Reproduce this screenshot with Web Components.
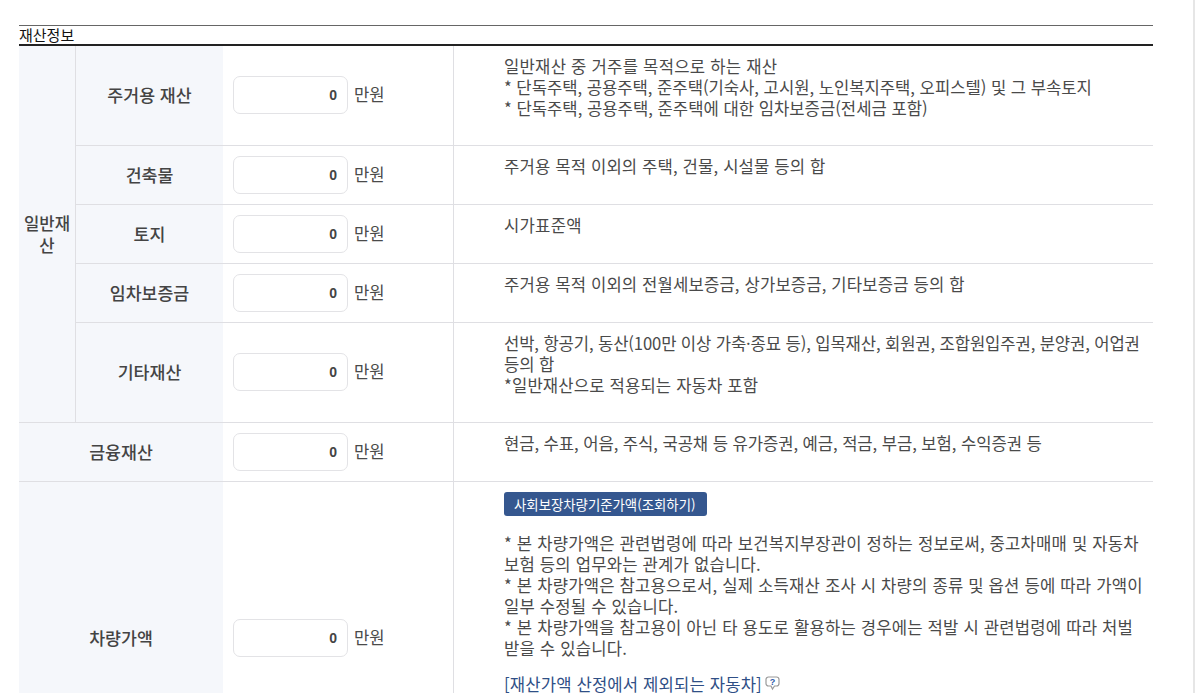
<!DOCTYPE html>
<html lang="ko">
<head>
<meta charset="utf-8">
<style>
  html, body { margin: 0; height: 693px; overflow: hidden; background: #fff; }
  body { font-family: "Noto Sans CJK KR", "Noto Sans", sans-serif; }
  /* small per-line tracking, the reference font has wider hangul and narrower commas */
  .a { letter-spacing: .24px; }
  .b { letter-spacing: .15px; }
  .c { letter-spacing: -.03px; }
  .d { letter-spacing: -.13px; }
  .e { letter-spacing: .19px; }
  .f { letter-spacing: -.08px; }
</style>
</head>
<body>
<asset-panel title-text="재산정보">
  <asset-group label="일반재산">
    <asset-row label="주거용 재산" style="--row-h:99px">
      <p><span class="a">일반재산 중 거주를 목적으로 하는 재산</span><br><span class="c">* 단독주택, 공용주택, 준주택(기숙사, 고시원, 노인복지주택, 오피스텔) 및 그 부속토지</span><br>* 단독주택, 공용주택, 준주택에 대한 임차보증금(전세금 포함)</p>
    </asset-row>
    <asset-row label="건축물" style="--row-h:58px"><p class="b">주거용 목적 이외의 주택, 건물, 시설물 등의 합</p></asset-row>
    <asset-row label="토지" style="--row-h:58px"><p class="a">시가표준액</p></asset-row>
    <asset-row label="임차보증금" style="--row-h:58px"><p class="b">주거용 목적 이외의 전월세보증금, 상가보증금, 기타보증금 등의 합</p></asset-row>
    <asset-row label="기타재산" style="--row-h:99px">
      <p><span class="d">선박, 항공기, 동산(100만 이상 가축·종묘 등), 입목재산, 회원권, 조합원입주권, 분양권, 어업권 등의 합</span><br><span class="b">*일반재산으로 적용되는 자동차 포함</span></p>
    </asset-row>
  </asset-group>
  <asset-row label="금융재산" wide style="--row-h:58px"><p class="f">현금, 수표, 어음, 주식, 국공채 등 유가증권, 예금, 적금, 부금, 보험, 수익증권 등</p></asset-row>
  <asset-row label="차량가액" wide style="--row-h:312px">
    <lookup-button>사회보장차량기준가액(조회하기)</lookup-button>
    <p class="e">* 본 차량가액은 관련법령에 따라 보건복지부장관이 정하는 정보로써, 중고차매매 및 자동차 보험 등의 업무와는 관계가 없습니다.<br>* 본 차량가액은 참고용으로서, 실제 소득재산 조사 시 차량의 종류 및 옵션 등에 따라 가액이 일부 수정될 수 있습니다.<br>* 본 차량가액을 참고용이 아닌 타 용도로 활용하는 경우에는 적발 시 관련법령에 따라 처벌 받을 수 있습니다.</p>
    <help-link class="b">[재산가액 산정에서 제외되는 자동차]</help-link>
  </asset-row>
</asset-panel>

<script>
// shared text look for the cells
const TEXT_FONT = `"Noto Sans CJK KR", "Noto Sans", sans-serif`;

class AssetPanel extends HTMLElement {
  constructor() {
    super();
    this.shadow = this.attachShadow({ mode: 'open' });
    this.shadow.innerHTML = `
      <style>
        :host { display: block; padding: 25px 40px 0 19px; height: 693px; overflow: hidden; border-right: 2px solid #e6e6e6; box-sizing: border-box; font-family: ${TEXT_FONT}; }
        .cap { border-top: 1px solid #666; border-bottom: 2px solid #222; height: 18px; font-size: 15px; line-height: 17px; color: #111; }
      </style>
      <div class="cap">${this.getAttribute('title-text')}</div>
      <slot></slot>
    `;
  }
}

class AssetGroup extends HTMLElement {
  constructor() {
    super();
    this.shadow = this.attachShadow({ mode: 'open' });
    this.shadow.innerHTML = `
      <style>
        :host { display: flex; }
        .label { width: 56px; flex: none; border-right: 1px solid #dfdfe3; border-bottom: 1px solid #dfdfe3; background: #f5f7fb; display: flex; align-items: center; justify-content: center; text-align: center; font-size: 16.7px; line-height: 22px; color: #444; font-weight: 500; word-break: break-all; }
        .rows { flex: 1; min-width: 0; }
      </style>
      <div class="label">${this.getAttribute('label')}</div>
      <div class="rows"><slot></slot></div>
    `;
  }
}

class AssetRow extends HTMLElement {
  constructor() {
    super();
    this.shadow = this.attachShadow({ mode: 'open' });
    this.shadow.innerHTML = `
      <style>
        :host { display: flex; min-height: var(--row-h); border-bottom: 1px solid #dfdfe3; font-size: 16.65px; color: #4a4a4a; }
        :host([wide]) .head { width: 204px; }
        .head { width: 147px; flex: none; box-sizing: border-box; padding-bottom: 2px; background: #f5f7fb; display: flex; align-items: center; justify-content: center; font-size: 17.3px; font-weight: 500; color: #444; }
        .amount { width: 231px; flex: none; box-sizing: border-box; padding: 0 0 1px 10px; border-right: 1px solid #dfdfe3; display: flex; align-items: center; }
        .desc { flex: 1; min-width: 0; padding: 10px 5px 0 50px; line-height: 21px; word-break: keep-all; }
        ::slotted(p) { margin: 0; }
      </style>
      <div class="head">${this.getAttribute('label')}</div>
      <div class="amount"><money-input></money-input></div>
      <div class="desc"><slot></slot></div>
    `;
  }
}

class MoneyInput extends HTMLElement {
  constructor() {
    super();
    this.shadow = this.attachShadow({ mode: 'open' });
    this.shadow.innerHTML = `
      <style>
        :host { display: flex; align-items: center; gap: 6px; }
        .box { width: 103px; height: 36px; border: 1px solid #e3e3e6; border-radius: 7px; display: flex; align-items: center; justify-content: flex-end; padding-right: 10px; font: 700 14px "Liberation Sans", sans-serif; color: #444; }
        span { padding-bottom: 2px; }
      </style>
      <div class="box">0</div><span>만원</span>
    `;
  }
}

class LookupButton extends HTMLElement {
  constructor() {
    super();
    this.shadow = this.attachShadow({ mode: 'open' });
    this.shadow.innerHTML = `
      <style>
        :host { display: inline-block; background: #35578f; color: #fff; border-radius: 3px; font-size: 13.4px; line-height: 24px; padding: 0 11px 0 10px; margin-bottom: 17px; }
      </style>
      <slot></slot>
    `;
  }
}

class HelpLink extends HTMLElement {
  constructor() {
    super();
    this.shadow = this.attachShadow({ mode: 'open' });
    this.shadow.innerHTML = `
      <style>
        :host { display: flex; align-items: center; gap: 3px; margin-top: 15px; color: #2f4f86; }
        svg { width: 15px; height: 15px; margin-top: -3px; }
      </style>
      <slot></slot>
      <svg viewBox="0 0 15 15" fill="none"><path d="M3.500 1h8a2.500 2.500 0 0 1 2.500 2.500v4a2.500 2.500 0 0 1-2.500 2.500H9.500L7.500 13 6 10H3.500A2.500 2.500 0 0 1 1 7.500v-4A2.500 2.500 0 0 1 3.500 1z" stroke="#999" stroke-width="1.200"/><text x="7.500" y="8.500" font-size="9" font-weight="700" text-anchor="middle" fill="#2b5aa8" font-family="Liberation Sans">?</text></svg>
    `;
  }
}

customElements.define('asset-panel', AssetPanel);
customElements.define('asset-group', AssetGroup);
customElements.define('asset-row', AssetRow);
customElements.define('money-input', MoneyInput);
customElements.define('lookup-button', LookupButton);
customElements.define('help-link', HelpLink);
</script>
</body>
</html>
